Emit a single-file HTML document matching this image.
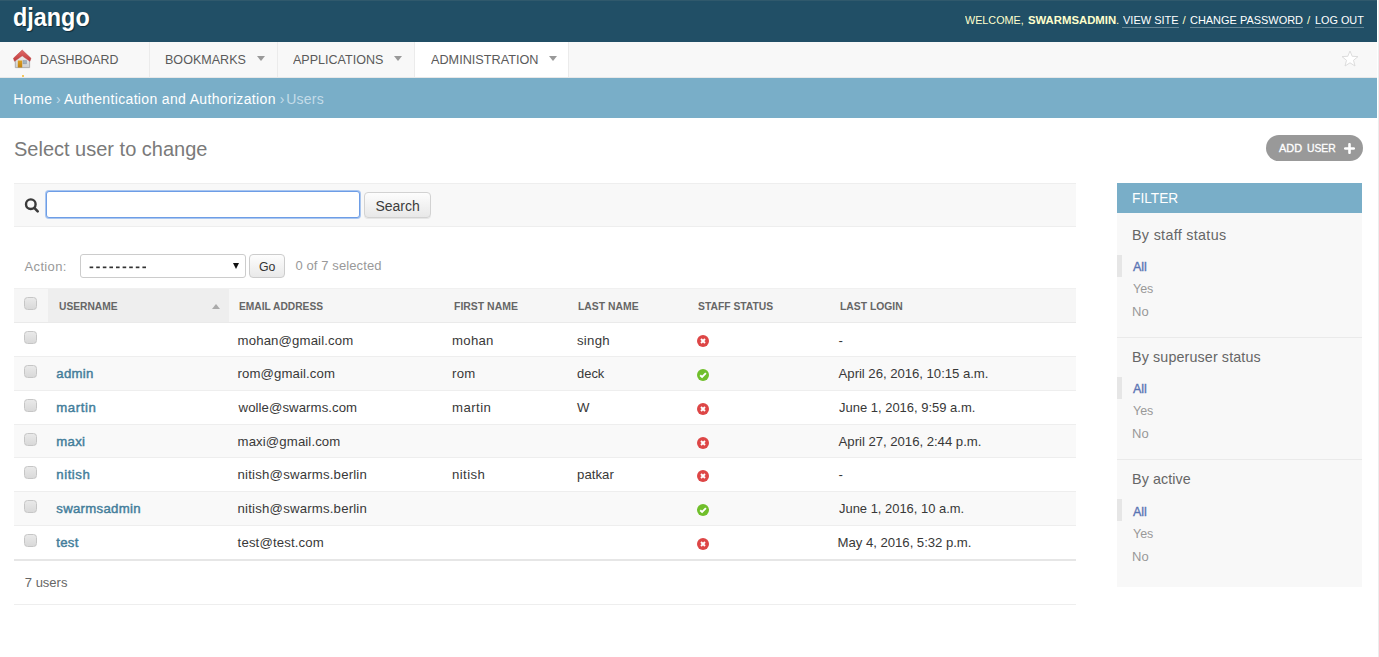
<!DOCTYPE html>
<html><head><meta charset="utf-8"><title>Select user to change</title>
<style>
*{box-sizing:border-box;margin:0;padding:0}
html,body{width:1379px;height:657px;overflow:hidden;background:#fff}
body{font-family:"Liberation Sans",sans-serif;position:relative}
#page{position:absolute;left:0;top:0;width:1379px;height:657px;background:#fff}
#page div,#page svg{position:absolute}
#txt{left:0;top:0;width:1379px;height:657px}
#txt span{position:absolute;white-space:nowrap;font-family:"Liberation Sans",sans-serif}

</style></head><body>
<div id="page">
<div style="left:0;top:0;width:1377px;height:41.5px;background:#214f66"></div>
<div style="left:0;top:0;width:1377px;height:1px;background:#30596c"></div>
<div style="left:1122px;top:27px;width:57px;height:1px;background:rgba(255,255,255,.3)"></div>
<div style="left:1190px;top:27px;width:113px;height:1px;background:rgba(255,255,255,.3)"></div>
<div style="left:1315px;top:27px;width:49px;height:1px;background:rgba(255,255,255,.3)"></div>
<!-- nav -->
<div style="left:0;top:41.5px;width:1377px;height:36.5px;background:#f8f8f8;border-bottom:1px solid #e8e8e8"></div>
<div style="left:149px;top:42px;width:1px;height:35px;background:#ebebeb"></div>
<div style="left:277px;top:42px;width:1px;height:35px;background:#ebebeb"></div>
<div style="left:414px;top:42px;width:155px;height:35px;background:#fff;border-left:1px solid #ebebeb;border-right:1px solid #ebebeb"></div>
<div style="left:257px;top:56px;width:0;height:0;border-left:4px solid transparent;border-right:4px solid transparent;border-top:5px solid #999"></div>
<div style="left:394px;top:56px;width:0;height:0;border-left:4px solid transparent;border-right:4px solid transparent;border-top:5px solid #999"></div>
<div style="left:549px;top:56px;width:0;height:0;border-left:4px solid transparent;border-right:4px solid transparent;border-top:5px solid #999"></div>
<svg style="left:13px;top:49px" width="19" height="20" viewBox="0 0 19 20">
  <defs><linearGradient id="wl" x1="0" y1="0" x2="0" y2="1"><stop offset="0" stop-color="#f4f4f4"/><stop offset="1" stop-color="#cfcfcf"/></linearGradient>
  <linearGradient id="rf" x1="0" y1="0" x2="0" y2="1"><stop offset="0" stop-color="#e06a6a"/><stop offset="1" stop-color="#c03a3a"/></linearGradient>
  <linearGradient id="dr" x1="0" y1="0" x2="0" y2="1"><stop offset="0" stop-color="#e0a020"/><stop offset="1" stop-color="#c08010"/></linearGradient></defs>
  <path d="M2.3 9 L9.2 3.5 L16.6 9 L16.6 18.6 L2.3 18.6 Z" fill="url(#wl)" stroke="#a9a9a9" stroke-width="0.9"/>
  <rect x="4.8" y="11.5" width="4.4" height="7" fill="url(#dr)"/>
  <rect x="10" y="11.5" width="3.6" height="3.4" fill="#9fb3bd" stroke="#889" stroke-width="0.4"/>
  <path d="M9.2 1 L18 9.3 L16.9 12.3 L9.2 6.8 L1.5 12.3 L0.4 9.3 Z" fill="url(#rf)" stroke="#b84040" stroke-width="0.5"/>
</svg>
<div style="left:22px;top:75px;width:2px;height:2px;background:#f5b82e;border-radius:1px"></div>
<!-- star -->
<svg style="left:1340px;top:49px" width="20" height="20" viewBox="0 0 20 20">
  <path d="M10 2 L12.2 7.3 L18 7.6 L13.5 11.3 L15 17 L10 13.8 L5 17 L6.5 11.3 L2 7.6 L7.8 7.3 Z" fill="#fff" stroke="#ddd" stroke-width="1"/>
</svg>
<!-- breadcrumbs -->
<div style="left:0;top:78px;width:1377px;height:40px;background:#79aec8"></div>
<!-- right strip -->
<div style="left:1378px;top:0;width:1px;height:657px;background:#ececec"></div>
<!-- add user -->
<div style="left:1266px;top:135px;width:97px;height:26px;border-radius:13px;background:#999"></div>
<svg style="left:1344px;top:142.5px" width="11" height="11" viewBox="0 0 11 11"><path d="M5.5 1.2 V9.8 M1.2 5.5 H9.8" stroke="#fff" stroke-width="2.6" stroke-linecap="round"/></svg>
<!-- toolbar -->
<div style="left:14px;top:183px;width:1062px;height:44px;background:#f8f8f8;border-top:1px solid #eee;border-bottom:1px solid #eee"></div>
<svg style="left:24px;top:198px" width="16" height="16" viewBox="0 0 16 16">
  <circle cx="6.8" cy="6.2" r="4.8" fill="none" stroke="#3a3a3a" stroke-width="2.4"/>
  <path d="M10.3 9.9 L13.7 13.4" stroke="#3a3a3a" stroke-width="2.6" stroke-linecap="round"/>
</svg>
<div style="left:46px;top:191px;width:314px;height:27px;border:1px solid #6d9de6;border-radius:3px;background:#fff;box-shadow:0 0 0 1px #a9c6f0"></div>
<div style="left:364px;top:192px;width:67px;height:26px;border:1px solid #d2d2d2;border-radius:4px;background:linear-gradient(#fdfdfd,#e8e8e8);box-shadow:0 1px 0 #e6e6e6"></div>
<!-- actions -->
<div style="left:80px;top:254px;width:166px;height:24px;border:1px solid #ccc;border-radius:3px;background:#fff"></div>
<svg style="left:89px;top:265px" width="60" height="4" viewBox="0 0 60 4"><rect x="0.60" y="1.5" width="3.6" height="1.7" fill="#333"/><rect x="7.20" y="1.5" width="3.6" height="1.7" fill="#333"/><rect x="13.80" y="1.5" width="3.6" height="1.7" fill="#333"/><rect x="20.40" y="1.5" width="3.6" height="1.7" fill="#333"/><rect x="27.00" y="1.5" width="3.6" height="1.7" fill="#333"/><rect x="33.60" y="1.5" width="3.6" height="1.7" fill="#333"/><rect x="40.20" y="1.5" width="3.6" height="1.7" fill="#333"/><rect x="46.80" y="1.5" width="3.6" height="1.7" fill="#333"/><rect x="53.40" y="1.5" width="3.6" height="1.7" fill="#333"/></svg>
<div style="left:233px;top:262.5px;width:0;height:0;border-left:3.5px solid transparent;border-right:3.5px solid transparent;border-top:6px solid #111"></div>
<div style="left:249px;top:254px;width:36px;height:24px;border:1px solid #ccc;border-radius:4px;background:linear-gradient(#fdfdfd,#e9e9e9)"></div>
<!-- table -->
<div style="left:14px;top:288px;width:1062px;height:35px;background:#f6f6f6;border-top:1px solid #f0f0f0;border-bottom:1px solid #eaeaea"></div>
<div style="left:48px;top:288.5px;width:181px;height:33.5px;background:#eee"></div>
<div style="left:212px;top:304px;width:0;height:0;border-left:4.5px solid transparent;border-right:4.5px solid transparent;border-bottom:5px solid #aaa"></div>
<div style="left:24px;top:297px;width:13px;height:13px;border:1.5px solid #c6c6c6;border-radius:3.5px;background:linear-gradient(#e9e9e9,#d9d9d9)"></div>
<div style="left:14px;top:323px;width:1062px;height:33px;background:#fff"></div>
<div style="left:14px;top:356px;width:1062px;height:1px;background:#eee"></div>
<div style="left:24px;top:331px;width:13px;height:13px;border:1.5px solid #c6c6c6;border-radius:3.5px;background:linear-gradient(#e9e9e9,#d9d9d9)"></div>
<svg style="left:697px;top:335.3px" width="12" height="12" viewBox="0 0 12 12"><circle cx="6" cy="6" r="6" fill="#dd4646"/><path d="M4 4 L8 8 M8 4 L4 8" fill="none" stroke="#fff" stroke-width="1.9"/></svg>
<div style="left:14px;top:357px;width:1062px;height:33px;background:#f9f9f9"></div>
<div style="left:14px;top:390px;width:1062px;height:1px;background:#eee"></div>
<div style="left:24px;top:365px;width:13px;height:13px;border:1.5px solid #c6c6c6;border-radius:3.5px;background:linear-gradient(#e9e9e9,#d9d9d9)"></div>
<svg style="left:697px;top:369.3px" width="12" height="12" viewBox="0 0 12 12"><circle cx="6" cy="6" r="6" fill="#70bf2b"/><path d="M3.2 6.2 L5.1 8 L8.9 4.2" fill="none" stroke="#fff" stroke-width="1.9"/></svg>
<div style="left:14px;top:391px;width:1062px;height:33px;background:#fff"></div>
<div style="left:14px;top:424px;width:1062px;height:1px;background:#eee"></div>
<div style="left:24px;top:399px;width:13px;height:13px;border:1.5px solid #c6c6c6;border-radius:3.5px;background:linear-gradient(#e9e9e9,#d9d9d9)"></div>
<svg style="left:697px;top:403.3px" width="12" height="12" viewBox="0 0 12 12"><circle cx="6" cy="6" r="6" fill="#dd4646"/><path d="M4 4 L8 8 M8 4 L4 8" fill="none" stroke="#fff" stroke-width="1.9"/></svg>
<div style="left:14px;top:425px;width:1062px;height:32px;background:#f9f9f9"></div>
<div style="left:14px;top:457px;width:1062px;height:1px;background:#eee"></div>
<div style="left:24px;top:433px;width:13px;height:13px;border:1.5px solid #c6c6c6;border-radius:3.5px;background:linear-gradient(#e9e9e9,#d9d9d9)"></div>
<svg style="left:697px;top:437.3px" width="12" height="12" viewBox="0 0 12 12"><circle cx="6" cy="6" r="6" fill="#dd4646"/><path d="M4 4 L8 8 M8 4 L4 8" fill="none" stroke="#fff" stroke-width="1.9"/></svg>
<div style="left:14px;top:458px;width:1062px;height:33px;background:#fff"></div>
<div style="left:14px;top:491px;width:1062px;height:1px;background:#eee"></div>
<div style="left:24px;top:466px;width:13px;height:13px;border:1.5px solid #c6c6c6;border-radius:3.5px;background:linear-gradient(#e9e9e9,#d9d9d9)"></div>
<svg style="left:697px;top:470.3px" width="12" height="12" viewBox="0 0 12 12"><circle cx="6" cy="6" r="6" fill="#dd4646"/><path d="M4 4 L8 8 M8 4 L4 8" fill="none" stroke="#fff" stroke-width="1.9"/></svg>
<div style="left:14px;top:492px;width:1062px;height:33px;background:#f9f9f9"></div>
<div style="left:14px;top:525px;width:1062px;height:1px;background:#eee"></div>
<div style="left:24px;top:500px;width:13px;height:13px;border:1.5px solid #c6c6c6;border-radius:3.5px;background:linear-gradient(#e9e9e9,#d9d9d9)"></div>
<svg style="left:697px;top:504.3px" width="12" height="12" viewBox="0 0 12 12"><circle cx="6" cy="6" r="6" fill="#70bf2b"/><path d="M3.2 6.2 L5.1 8 L8.9 4.2" fill="none" stroke="#fff" stroke-width="1.9"/></svg>
<div style="left:14px;top:526px;width:1062px;height:33px;background:#fff"></div>
<div style="left:24px;top:534px;width:13px;height:13px;border:1.5px solid #c6c6c6;border-radius:3.5px;background:linear-gradient(#e9e9e9,#d9d9d9)"></div>
<svg style="left:697px;top:538.3px" width="12" height="12" viewBox="0 0 12 12"><circle cx="6" cy="6" r="6" fill="#dd4646"/><path d="M4 4 L8 8 M8 4 L4 8" fill="none" stroke="#fff" stroke-width="1.9"/></svg>
<div style="left:14px;top:559px;width:1062px;height:2px;background:#e6e6e6"></div>
<div style="left:14px;top:603.5px;width:1062px;height:1px;background:#eee"></div>
<div style="left:1117px;top:183px;width:245px;height:404px;background:#f8f8f8"></div>
<div style="left:1117px;top:183px;width:245px;height:30px;background:#79aec8"></div>
<div style="left:1117px;top:337px;width:245px;height:1px;background:#eaeaea"></div>
<div style="left:1117px;top:459px;width:245px;height:1px;background:#eaeaea"></div>
<div style="left:1117px;top:254.6px;width:5px;height:22px;background:#e6e6e6"></div>
<div style="left:1117px;top:376.5px;width:5px;height:22px;background:#e6e6e6"></div>
<div style="left:1117px;top:499.4px;width:5px;height:22px;background:#e6e6e6"></div>
<div id="txt">
<span style="left:13.20px;top:4.09px;font-size:26px;line-height:26px;font-weight:bold;color:#fff;letter-spacing:0.000px;transform:scaleX(0.9000);transform-origin:0 0;text-shadow:1px 1px 1px rgba(0,0,0,.45);">django</span>
<span style="left:965.40px;top:14.77px;font-size:11.5px;line-height:11.5px;font-weight:normal;color:#ffc;letter-spacing:0.000px;transform:scaleX(0.9372);transform-origin:0 0;">WELCOME,</span>
<span style="left:1028.00px;top:14.77px;font-size:11.5px;line-height:11.5px;font-weight:bold;color:#ffc;letter-spacing:0.000px;transform:scaleX(0.9850);transform-origin:0 0;">SWARMSADMIN</span>
<span style="left:1116.00px;top:14.77px;font-size:11.5px;line-height:11.5px;font-weight:normal;color:#ffc;letter-spacing:0.000px;">.</span>
<span style="left:1122.70px;top:14.77px;font-size:11.5px;line-height:11.5px;font-weight:normal;color:#fff;letter-spacing:0.000px;transform:scaleX(0.9577);transform-origin:0 0;">VIEW SITE</span>
<span style="left:1182.60px;top:14.77px;font-size:11.5px;line-height:11.5px;font-weight:normal;color:#ffc;letter-spacing:0.000px;">/</span>
<span style="left:1190.40px;top:14.77px;font-size:11.5px;line-height:11.5px;font-weight:normal;color:#fff;letter-spacing:0.000px;transform:scaleX(0.9524);transform-origin:0 0;">CHANGE PASSWORD</span>
<span style="left:1307.00px;top:14.77px;font-size:11.5px;line-height:11.5px;font-weight:normal;color:#ffc;letter-spacing:0.000px;">/</span>
<span style="left:1315.20px;top:14.77px;font-size:11.5px;line-height:11.5px;font-weight:normal;color:#fff;letter-spacing:0.000px;transform:scaleX(0.9433);transform-origin:0 0;">LOG OUT</span>
<span style="left:39.93px;top:53.56px;font-size:12.8px;line-height:12.8px;font-weight:normal;color:#5a5a5a;letter-spacing:0.000px;transform:scaleX(0.9672);transform-origin:0 0;">DASHBOARD</span>
<span style="left:165.02px;top:53.56px;font-size:12.8px;line-height:12.8px;font-weight:normal;color:#5a5a5a;letter-spacing:0.000px;transform:scaleX(0.9808);transform-origin:0 0;">BOOKMARKS</span>
<span style="left:293.20px;top:53.56px;font-size:12.8px;line-height:12.8px;font-weight:normal;color:#5a5a5a;letter-spacing:0.000px;transform:scaleX(0.9796);transform-origin:0 0;">APPLICATIONS</span>
<span style="left:430.80px;top:53.56px;font-size:12.8px;line-height:12.8px;font-weight:normal;color:#5a5a5a;letter-spacing:0.000px;transform:scaleX(0.9899);transform-origin:0 0;">ADMINISTRATION</span>
<span style="left:13.30px;top:92.35px;font-size:14px;line-height:14px;font-weight:normal;color:#fff;letter-spacing:0.480px;">Home</span>
<span style="left:56.00px;top:92.35px;font-size:14px;line-height:14px;font-weight:normal;color:#c4dce8;letter-spacing:0.000px;">›</span>
<span style="left:64.10px;top:92.35px;font-size:14px;line-height:14px;font-weight:normal;color:#fff;letter-spacing:0.339px;">Authentication and Authorization</span>
<span style="left:279.80px;top:92.35px;font-size:14px;line-height:14px;font-weight:normal;color:#c4dce8;letter-spacing:0.000px;">›</span>
<span style="left:286.20px;top:92.35px;font-size:14px;line-height:14px;font-weight:normal;color:#c4dce8;letter-spacing:0.235px;">Users</span>
<span style="left:14.00px;top:139.25px;font-size:20.5px;line-height:20.5px;font-weight:normal;color:#7a7a7a;letter-spacing:0.000px;transform:scaleX(0.9753);transform-origin:0 0;">Select user to change</span>
<span style="left:1279.20px;top:142.63px;font-size:11.3px;line-height:11.3px;font-weight:normal;color:#fff;letter-spacing:0.000px;transform:scaleX(0.9707);transform-origin:0 0;-webkit-text-stroke:0.3px #fff;">ADD</span>
<span style="left:1306.50px;top:142.63px;font-size:11.3px;line-height:11.3px;font-weight:normal;color:#fff;letter-spacing:0.000px;transform:scaleX(0.9158);transform-origin:0 0;-webkit-text-stroke:0.3px #fff;">USER</span>
<span style="left:375.40px;top:198.75px;font-size:14px;line-height:14px;font-weight:normal;color:#3c3c3c;letter-spacing:0.006px;">Search</span>
<span style="left:24.60px;top:259.90px;font-size:13px;line-height:13px;font-weight:normal;color:#999;letter-spacing:0.328px;">Action:</span>
<span style="left:259.20px;top:259.80px;font-size:13px;line-height:13px;font-weight:normal;color:#333;letter-spacing:0.000px;transform:scaleX(0.9467);transform-origin:0 0;">Go</span>
<span style="left:295.40px;top:258.70px;font-size:13px;line-height:13px;font-weight:normal;color:#999;letter-spacing:0.112px;">0 of 7 selected</span>
<span style="left:58.50px;top:300.77px;font-size:11.5px;line-height:11.5px;font-weight:bold;color:#666;letter-spacing:0.000px;transform:scaleX(0.8905);transform-origin:0 0;">USERNAME</span>
<span style="left:239.20px;top:300.77px;font-size:11.5px;line-height:11.5px;font-weight:bold;color:#666;letter-spacing:0.000px;transform:scaleX(0.8887);transform-origin:0 0;">EMAIL ADDRESS</span>
<span style="left:453.90px;top:300.77px;font-size:11.5px;line-height:11.5px;font-weight:bold;color:#666;letter-spacing:0.000px;transform:scaleX(0.9093);transform-origin:0 0;">FIRST NAME</span>
<span style="left:578.40px;top:300.77px;font-size:11.5px;line-height:11.5px;font-weight:bold;color:#666;letter-spacing:0.000px;transform:scaleX(0.9034);transform-origin:0 0;">LAST NAME</span>
<span style="left:698.30px;top:300.77px;font-size:11.5px;line-height:11.5px;font-weight:bold;color:#666;letter-spacing:0.000px;transform:scaleX(0.8987);transform-origin:0 0;">STAFF STATUS</span>
<span style="left:840.20px;top:300.77px;font-size:11.5px;line-height:11.5px;font-weight:bold;color:#666;letter-spacing:0.000px;transform:scaleX(0.9000);transform-origin:0 0;">LAST LOGIN</span>
<span style="left:237.60px;top:333.63px;font-size:13.2px;line-height:13.2px;font-weight:normal;color:#383838;letter-spacing:0.128px;">mohan@gmail.com</span>
<span style="left:452.00px;top:333.63px;font-size:13.2px;line-height:13.2px;font-weight:normal;color:#383838;letter-spacing:0.278px;">mohan</span>
<span style="left:577.00px;top:333.63px;font-size:13.2px;line-height:13.2px;font-weight:normal;color:#383838;letter-spacing:0.277px;">singh</span>
<span style="left:838.60px;top:333.63px;font-size:13.2px;line-height:13.2px;font-weight:normal;color:#383838;letter-spacing:0.000px;">-</span>
<span style="left:56.30px;top:367.43px;font-size:13.2px;line-height:13.2px;font-weight:normal;color:#447e9b;letter-spacing:0.279px;-webkit-text-stroke:0.45px #447e9b;">admin</span>
<span style="left:237.60px;top:367.43px;font-size:13.2px;line-height:13.2px;font-weight:normal;color:#383838;letter-spacing:0.100px;">rom@gmail.com</span>
<span style="left:452.00px;top:367.43px;font-size:13.2px;line-height:13.2px;font-weight:normal;color:#383838;letter-spacing:0.287px;">rom</span>
<span style="left:577.00px;top:367.43px;font-size:13.2px;line-height:13.2px;font-weight:normal;color:#383838;letter-spacing:0.000px;transform:scaleX(0.9801);transform-origin:0 0;">deck</span>
<span style="left:838.60px;top:367.43px;font-size:13.2px;line-height:13.2px;font-weight:normal;color:#383838;letter-spacing:-0.046px;">April 26, 2016, 10:15 a.m.</span>
<span style="left:56.30px;top:401.33px;font-size:13.2px;line-height:13.2px;font-weight:normal;color:#447e9b;letter-spacing:0.579px;-webkit-text-stroke:0.45px #447e9b;">martin</span>
<span style="left:238.60px;top:401.33px;font-size:13.2px;line-height:13.2px;font-weight:normal;color:#383838;letter-spacing:0.070px;">wolle@swarms.com</span>
<span style="left:452.00px;top:401.33px;font-size:13.2px;line-height:13.2px;font-weight:normal;color:#383838;letter-spacing:0.439px;">martin</span>
<span style="left:577.00px;top:401.33px;font-size:13.2px;line-height:13.2px;font-weight:normal;color:#383838;letter-spacing:0.000px;">W</span>
<span style="left:838.60px;top:401.33px;font-size:13.2px;line-height:13.2px;font-weight:normal;color:#383838;letter-spacing:0.000px;transform:scaleX(0.9840);transform-origin:0 0;">June 1, 2016, 9:59 a.m.</span>
<span style="left:56.30px;top:435.13px;font-size:13.2px;line-height:13.2px;font-weight:normal;color:#447e9b;letter-spacing:0.262px;-webkit-text-stroke:0.45px #447e9b;">maxi</span>
<span style="left:237.60px;top:435.13px;font-size:13.2px;line-height:13.2px;font-weight:normal;color:#383838;letter-spacing:0.105px;">maxi@gmail.com</span>
<span style="left:838.60px;top:435.13px;font-size:13.2px;line-height:13.2px;font-weight:normal;color:#383838;letter-spacing:-0.038px;">April 27, 2016, 2:44 p.m.</span>
<span style="left:56.30px;top:468.43px;font-size:13.2px;line-height:13.2px;font-weight:normal;color:#447e9b;letter-spacing:0.550px;-webkit-text-stroke:0.45px #447e9b;">nitish</span>
<span style="left:237.60px;top:468.43px;font-size:13.2px;line-height:13.2px;font-weight:normal;color:#383838;letter-spacing:0.196px;">nitish@swarms.berlin</span>
<span style="left:452.00px;top:468.43px;font-size:13.2px;line-height:13.2px;font-weight:normal;color:#383838;letter-spacing:0.430px;">nitish</span>
<span style="left:577.00px;top:468.43px;font-size:13.2px;line-height:13.2px;font-weight:normal;color:#383838;letter-spacing:0.048px;">patkar</span>
<span style="left:838.60px;top:468.43px;font-size:13.2px;line-height:13.2px;font-weight:normal;color:#383838;letter-spacing:0.000px;">-</span>
<span style="left:56.30px;top:502.33px;font-size:13.2px;line-height:13.2px;font-weight:normal;color:#447e9b;letter-spacing:0.289px;-webkit-text-stroke:0.45px #447e9b;">swarmsadmin</span>
<span style="left:237.60px;top:502.33px;font-size:13.2px;line-height:13.2px;font-weight:normal;color:#383838;letter-spacing:0.196px;">nitish@swarms.berlin</span>
<span style="left:838.60px;top:502.33px;font-size:13.2px;line-height:13.2px;font-weight:normal;color:#383838;letter-spacing:0.000px;transform:scaleX(0.9811);transform-origin:0 0;">June 1, 2016, 10 a.m.</span>
<span style="left:56.30px;top:536.33px;font-size:13.2px;line-height:13.2px;font-weight:normal;color:#447e9b;letter-spacing:0.269px;-webkit-text-stroke:0.45px #447e9b;">test</span>
<span style="left:237.60px;top:536.33px;font-size:13.2px;line-height:13.2px;font-weight:normal;color:#383838;letter-spacing:0.142px;">test@test.com</span>
<span style="left:837.60px;top:536.33px;font-size:13.2px;line-height:13.2px;font-weight:normal;color:#383838;letter-spacing:-0.048px;">May 4, 2016, 5:32 p.m.</span>
<span style="left:24.80px;top:576.00px;font-size:13px;line-height:13px;font-weight:normal;color:#666;letter-spacing:0.000px;">7 users</span>
<span style="left:1132.12px;top:191.15px;font-size:14px;line-height:14px;font-weight:normal;color:#fff;letter-spacing:0.000px;transform:scaleX(0.9809);transform-origin:0 0;">FILTER</span>
<span style="left:1132.00px;top:228.00px;font-size:14.3px;line-height:14.3px;font-weight:normal;color:#666;letter-spacing:0.323px;">By staff status</span>
<span style="left:1132.00px;top:349.90px;font-size:14.3px;line-height:14.3px;font-weight:normal;color:#666;letter-spacing:0.128px;">By superuser status</span>
<span style="left:1132.00px;top:471.90px;font-size:14.3px;line-height:14.3px;font-weight:normal;color:#666;letter-spacing:0.093px;">By active</span>
<span style="left:1133.00px;top:260.00px;font-size:13px;line-height:13px;font-weight:normal;color:#5a74b4;letter-spacing:0.000px;transform:scaleX(0.9616);transform-origin:0 0;-webkit-text-stroke:0.35px #5a74b4;">All</span>
<span style="left:1133.00px;top:282.40px;font-size:13px;line-height:13px;font-weight:normal;color:#999;letter-spacing:0.000px;transform:scaleX(0.9582);transform-origin:0 0;">Yes</span>
<span style="left:1132.00px;top:304.80px;font-size:13px;line-height:13px;font-weight:normal;color:#999;letter-spacing:0.000px;">No</span>
<span style="left:1133.00px;top:381.90px;font-size:13px;line-height:13px;font-weight:normal;color:#5a74b4;letter-spacing:0.000px;transform:scaleX(0.9616);transform-origin:0 0;-webkit-text-stroke:0.35px #5a74b4;">All</span>
<span style="left:1133.00px;top:404.30px;font-size:13px;line-height:13px;font-weight:normal;color:#999;letter-spacing:0.000px;transform:scaleX(0.9582);transform-origin:0 0;">Yes</span>
<span style="left:1132.00px;top:426.70px;font-size:13px;line-height:13px;font-weight:normal;color:#999;letter-spacing:0.000px;">No</span>
<span style="left:1133.00px;top:504.80px;font-size:13px;line-height:13px;font-weight:normal;color:#5a74b4;letter-spacing:0.000px;transform:scaleX(0.9616);transform-origin:0 0;-webkit-text-stroke:0.35px #5a74b4;">All</span>
<span style="left:1133.00px;top:527.20px;font-size:13px;line-height:13px;font-weight:normal;color:#999;letter-spacing:0.000px;transform:scaleX(0.9582);transform-origin:0 0;">Yes</span>
<span style="left:1132.00px;top:549.60px;font-size:13px;line-height:13px;font-weight:normal;color:#999;letter-spacing:0.000px;">No</span>
</div>
</div>
</body></html>
